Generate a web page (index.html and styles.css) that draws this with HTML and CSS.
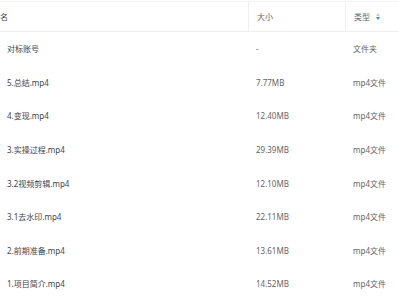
FILE: index.html
```html
<!DOCTYPE html>
<html lang="zh-CN">
<head>
    <meta charset="UTF-8">
    <title>文件列表</title>
    <link rel="stylesheet" href="styles.css">
</head>
<body>
    <div class="lista">
        <div class="cabecera">
            <div class="col nombre">名</div>
            <div class="col tamano">大小</div>
            <div class="col tipo">类型
                <span class="orden">
                    <span class="flecha arriba"></span>
                    <span class="flecha abajo"></span>
                </span>
            </div>
        </div>
        <div class="fila">
            <div class="col nombre">对标账号</div>
            <div class="col tamano">-</div>
            <div class="col tipo">文件夹</div>
        </div>
        <div class="fila">
            <div class="col nombre">5.总结.mp4</div>
            <div class="col tamano">7.77MB</div>
            <div class="col tipo">mp4文件</div>
        </div>
        <div class="fila">
            <div class="col nombre">4.变现.mp4</div>
            <div class="col tamano">12.40MB</div>
            <div class="col tipo">mp4文件</div>
        </div>
        <div class="fila">
            <div class="col nombre">3.实操过程.mp4</div>
            <div class="col tamano">29.39MB</div>
            <div class="col tipo">mp4文件</div>
        </div>
        <div class="fila">
            <div class="col nombre">3.2视频剪辑.mp4</div>
            <div class="col tamano">12.10MB</div>
            <div class="col tipo">mp4文件</div>
        </div>
        <div class="fila">
            <div class="col nombre">3.1去水印.mp4</div>
            <div class="col tamano">22.11MB</div>
            <div class="col tipo">mp4文件</div>
        </div>
        <div class="fila">
            <div class="col nombre">2.前期准备.mp4</div>
            <div class="col tamano">13.61MB</div>
            <div class="col tipo">mp4文件</div>
        </div>
        <div class="fila">
            <div class="col nombre">1.项目简介.mp4</div>
            <div class="col tamano">14.52MB</div>
            <div class="col tipo">mp4文件</div>
        </div>
    </div>
</body>
</html>
```

FILE: styles.css
```css
body {
    font-family: "Noto Sans", "Noto Sans CJK SC", sans-serif;
    font-size: 8px;
    margin: 0;
    padding: 0;
    background-color: #ffffff;
    overflow: hidden;
}
.lista {
    padding-top: 1px;
}
.cabecera, .fila {
    display: grid;
    grid-template-columns: 248px 97px 1fr;
    align-items: center;
}
.cabecera {
    height: 29px;
    border-top: 1px solid #f2f2f2;
    border-bottom: 1px solid #efefef;
    color: #6b6b6b;
    align-items: stretch;
}
.cabecera .col {
    display: flex;
    align-items: center;
}
.cabecera .tamano, .cabecera .tipo {
    border-left: 1px solid #f0f0f0;
}
.cabecera .nombre {
    padding-left: 0;
}
.fila {
    height: 33.6px;
}
.col {
    white-space: nowrap;
    overflow: hidden;
}
.nombre {
    padding-left: 7px;
    color: #3c4450;
}
.tamano {
    padding-left: 8px;
    color: #666666;
}
.tipo {
    padding-left: 8px;
    color: #666666;
}
.orden {
    display: inline-flex;
    flex-direction: column;
    gap: 1px;
    margin-left: 6px;
}
.flecha {
    width: 0;
    height: 0;
    border-left: 2.5px solid transparent;
    border-right: 2.5px solid transparent;
}
.flecha.arriba {
    border-bottom: 3px solid #c8ccd4;
}
.flecha.abajo {
    border-top: 3px solid #2d8cf0;
}
```
